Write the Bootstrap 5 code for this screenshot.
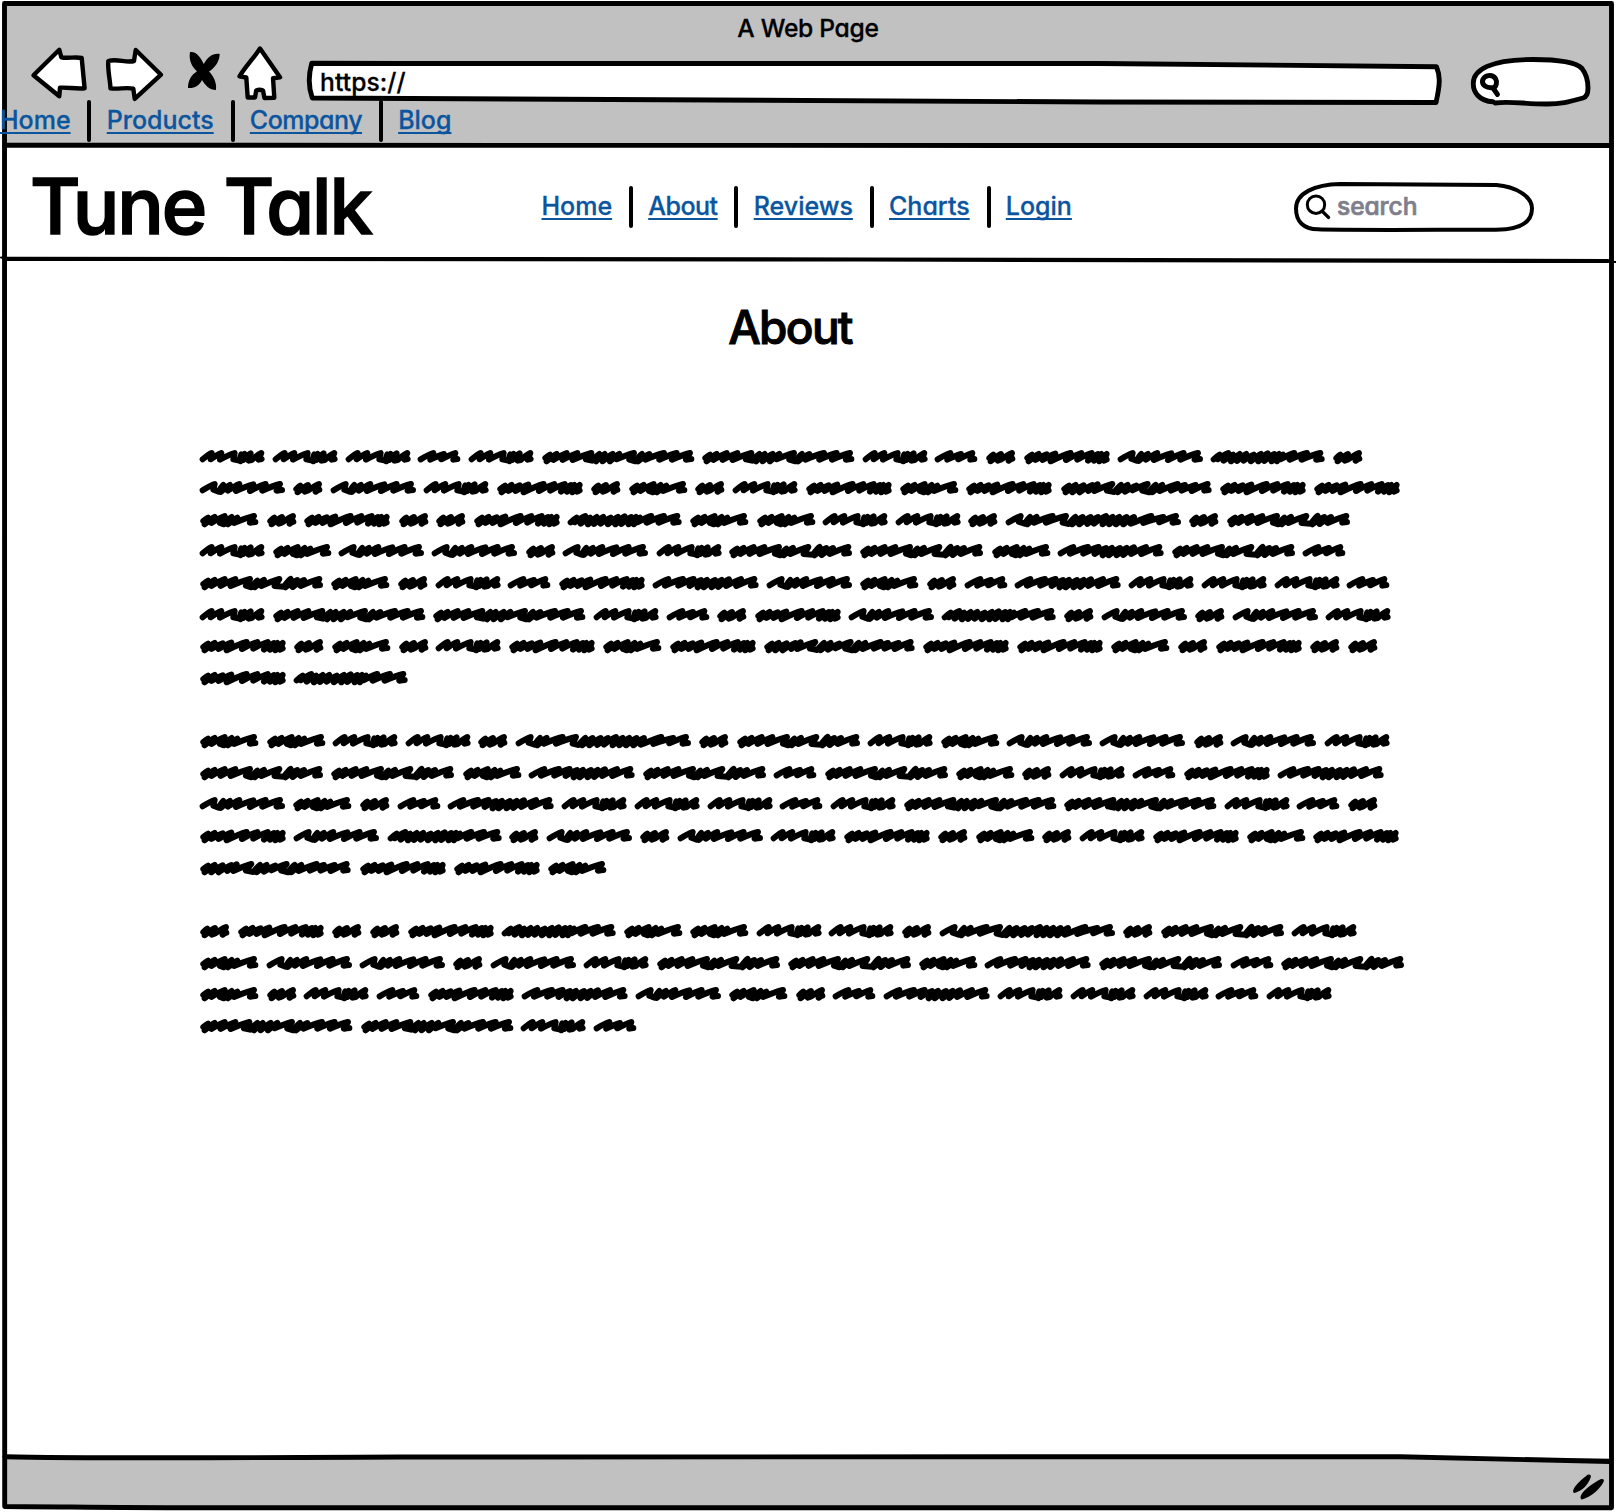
<!DOCTYPE html>
<html lang="en">
<head>
<meta charset="utf-8">
<meta name="viewport" content="width=device-width, initial-scale=1">
<title>A Web Page</title>
<link href="https://cdn.jsdelivr.net/npm/bootstrap@5.3.0/dist/css/bootstrap.min.css" rel="stylesheet">
<style>
  body { background: #fff; color: #000; font-family: Inter, "Open Sans", sans-serif; font-feature-settings: "cv11"; font-weight: 500; -webkit-text-stroke: .3px; overflow: hidden; }
  .sketch-window { width: 1616px; height: 1512px; padding: 4px 4px 4px 0; }
  .sketch-frame { pointer-events: none; z-index: 5; }
  .ink { fill: none; stroke: #000; stroke-linecap: round; stroke-linejoin: round; }
  .paper { fill: #fff; }
  .chrome-bar { background: #c1c1c1; margin-left: 4px; }
  .chrome-top { height: 141px; }
  .chrome-bottom { height: 50px; }
  .window-title { height: 42px; line-height: 49px; font-size: 24.6px; letter-spacing: -.28px; }
  .toolbar-row { height: 54px; padding-left: 24px; }
  .toolbar-row svg, .site-search svg { display: block; overflow: visible; flex: none; }
  .url-text { left: 16px; top: 18px; line-height: 36px; font-size: 24.6px; letter-spacing: .1px; }
  .bookmark-row { height: 45px; margin-left: -4px; }
  .link-row a { color: #0b559f; font-size: 25px; line-height: 40px; text-decoration: underline; text-decoration-thickness: 1.7px; text-underline-offset: 2.5px; text-decoration-skip-ink: none; white-space: nowrap; position: relative; z-index: 6; }
  .link-row .snug { letter-spacing: -.48px; }
  .divider { width: 4px; height: 42px; background: #000; border-radius: 2px; margin: 0 15.3px 0 16.8px; flex: none; }
  .site-header { height: 114px; padding: 10px 78px 0 30px; }
  .brand { width: 511.5px; font-size: 77.5px; line-height: 1; letter-spacing: -2.1px; -webkit-text-stroke: 1.6px; }
  .search-text { color: #7f7f8c; left: 43px; top: 9px; line-height: 30px; font-size: 24.6px; letter-spacing: -.1px; -webkit-text-stroke: .7px; }
  .page-heading { margin-top: 40px; padding-right: 32px; font-size: 46px; line-height: 56px; font-weight: 500; letter-spacing: -1.7px; -webkit-text-stroke: 1px; }
  .scribble-copy { padding: 94.6px 0 0 200.3px; }
  .scribble-block { margin-bottom: 31.63px; }
  .scribble-line { height: 31.63px; }
  .scribble-line svg { display: block; overflow: visible; flex: none; }
  .scribble-line path { stroke-width: 18; }
</style>
</head>
<body>
<div class="sketch-window d-flex flex-column position-relative">
  <header class="chrome-bar chrome-top d-flex flex-column">
    <div class="window-title text-center">A Web Page</div>
    <div class="toolbar-row d-flex">
      <svg width="72" height="54" viewBox="28 46 72 54"><path class="ink paper" stroke-width="4.4" d="M33.5 75.3 59.3 49.8 61.3 57.3C68 58.8 75 56.5 81.7 58L84.6 88.3C76 89.3 67 87 60 87.7L59.3 96.3Z"/></svg>
      <svg width="84" height="54" viewBox="100 46 84 54"><path class="ink paper" stroke-width="4.4" d="M108.3 61C117 58.5 126 63 134 61L135.7 50 161 74.7 134.7 98.8 133.3 88.6C126 87 118 89.5 110.5 88.3 110 79 107.5 70 108.3 61Z"/></svg>
      <svg width="50" height="54" viewBox="184 46 50 54"><path d="M190 52C196.500 51 201 58 203.800 64 207.500 57 213 53 219.700 54 219.500 61 215.500 67.500 209 71.500 213 75.500 217 82 216 90 209.500 90 205 85 202 80 199 86 194.500 88.500 188 88 188 80 191.500 75 197 71.300 192 67 188.500 60 190 52Z"/></svg>
      <svg width="70" height="54" viewBox="234 46 70 54"><path class="ink paper" stroke-width="4.4" d="M260 48.500 280 77.300 273 78.200 274.300 97.700 264.500 98 263 90.500Q259.500 89 256.200 90.500L255 97.500 247.700 97.500 246.300 77.500 239.500 76.300C246 66 253 59 260 48.500Z"/></svg>
      <div class="position-relative">
        <svg width="1162" height="54" viewBox="304 46 1162 54"><path class="ink paper" stroke-width="4.900" d="M311.700 63.300C600 64 900 62 1100 63.500L1436.500 66.700C1440.500 76 1440 85 1436 102.500L1100 102C850 101 600 98 312.300 98Q306.500 82 311.700 63.300Z"/></svg>
        <span class="url-text position-absolute">https://</span>
      </div>
      <svg width="128" height="54" viewBox="1466 46 128 54"><path class="ink paper" stroke-width="4.900" d="M1493 101.700C1479 101 1473 92 1473.300 83 1473.500 70 1490 59.500 1533 59.500 1557 59.500 1576 62 1582 68.500 1587 75 1588 81 1588 88 1588 93 1586.500 97 1583 98 1569 102 1560 104.200 1546 104 1525 104 1510 101 1495 103"/><path class="ink" stroke-width="4.900" d="M1493.500 87.500C1486 88.500 1482 85 1482.500 80.500 1484 75 1492 73.500 1495.500 78.500 1497.500 82 1496.500 87 1493 88L1497.500 94.500"/></svg>
    </div>
    <nav class="bookmark-row link-row d-flex">
      <a href="#">Home</a><span class="divider"></span>
      <a href="#">Products</a><span class="divider"></span>
      <a href="#" class="snug">Company</a><span class="divider"></span>
      <a href="#">Blog</a>
    </nav>
  </header>

  <div class="site-header d-flex align-items-center">
    <div class="brand text-nowrap">Tune Talk</div>
    <nav class="link-row d-flex">
      <a href="#">Home</a><span class="divider"></span>
      <a href="#" class="snug">About</a><span class="divider"></span>
      <a href="#">Reviews</a><span class="divider"></span>
      <a href="#">Charts</a><span class="divider"></span>
      <a href="#">Login</a>
    </nav>
    <div class="site-search position-relative ms-auto">
      <svg width="240" height="50" viewBox="1294 182 240 50"><path class="ink paper" stroke-width="4" d="M1340 184C1315 184.500 1296 193 1296 208.500 1296 221 1303 229 1318 229.300 1340 230.500 1470 229.500 1496 229.800 1520 229.500 1532 222 1532 208.500 1532 196 1515 186.500 1496.500 185Z"/><circle class="ink" stroke-width="3" cx="1316" cy="204.700" r="8.700"/><path class="ink" stroke-width="3.200" d="M1322.500 211.500 1328.600 217.500"/></svg>
      <span class="search-text position-absolute">search</span>
    </div>
  </div>

  <main class="flex-grow-1">
    <h1 class="page-heading text-center mb-0">About</h1>
    <div class="scribble-copy" id="copy"></div>
  </main>
  <footer class="chrome-bar chrome-bottom"></footer>

  <svg class="sketch-frame position-absolute top-0 start-0" width="1616" height="1512" viewBox="0 0 1616 1512">
    <g class="ink" stroke-width="4.900">
      <path d="M4.500 3.500H1611.500C1612.500 500 1611 1000 1611.500 1507.700 1000 1509 500 1504 216 1507.700 140 1508 80 1507 4.700 1506.500 5.500 1000 3.500 500 4.500 3.500Z"/>
      <path d="M5 145.200C300 147 700 147 1100 145.500H1610"/>
      <path stroke-width="4.200" d="M7 258.800C300 259.500 1200 259 1608 261"/>
      <path stroke-width="2" d="M1 257.500 10 259M1605 261.300 1616 262"/>
      <path d="M5 1456.700C100 1459 250 1457.500 400 1457 800 1455.500 1100 1456 1400 1456.700L1610 1461.500"/>
    </g>
    <path d="M1588 1474.500Q1592 1474 1590.500 1478C1588 1485 1582 1491 1574.500 1493 1571 1492 1574 1485 1588 1474.500ZM1601 1479Q1605 1478.500 1603.500 1482C1600 1489 1591 1497 1582 1499.500 1578 1498 1582 1489 1601 1479Z"/>
  </svg>
</div>
<script src="https://cdn.jsdelivr.net/npm/bootstrap@5.3.0/dist/js/bootstrap.bundle.min.js"></script>
<script>
  // Scribbled words: [advance, stroke points], drawn at a third of their size.
  const words = {
    a: [218, "8,28 35,9 32,28 64,9 60,29 104,9 100,28 118,32 124,13 121,34 134,12 130,30 152,10 146,32 155,30 184,9 176,29 185,27"],
    b: [152, "8,28 46,9 37,29 78,12 70,28 112,9 106,29 118,27"],
    c: [113.5, "10,24 22,14 14,34 45,12 36,32 46,28 78,9 68,32 79,26"],
    d: [199, "10,24 24,14 14,34 44,12 34,30 74,9 60,30 72,34 95,12 84,34 112,14 102,30 162,9 150,29 166,27"],
    e: [279.5, "8,28 44,9 40,26 56,32 70,12 62,33 90,12 84,29 118,9 108,30 160,10 150,30 197,9 187,29 240,9 230,29 246,27"],
    f: [282.5, "10,24 24,14 14,34 44,12 34,30 68,13 56,30 94,11 80,34 140,9 126,30 172,9 160,29 203,9 192,32 222,12 210,32 232,12 226,34 248,12 240,32 248,28"],
    g: [393.5, "10,24 24,14 14,34 44,12 34,30 74,9 62,30 106,9 92,30 150,9 138,29 154,34 172,14 164,34 192,12 184,30 238,9 224,30 252,32 272,9 256,34 292,12 278,33 312,12 302,30 358,9 346,29 360,27"],
    h: [365.5, "8,28 26,14 20,28 52,9 38,32 66,14 60,34 86,12 78,33 106,12 98,32 128,14 120,34 150,12 142,34 170,10 160,33 190,12 182,34 204,12 198,34 216,14 208,28 250,9 236,29 288,9 272,29 328,9 316,29 332,27"],
    i: [481.5, "10,24 24,14 14,34 44,12 34,30 74,9 62,30 106,9 92,30 148,9 132,28 150,32 172,12 162,34 188,12 182,34 212,12 204,34 232,12 224,28 276,9 262,29 280,34 300,12 288,34 322,12 310,29 366,9 352,29 404,9 390,29 444,9 432,29 448,27"],
    j: [478, "10,24 24,14 14,34 44,12 34,34 68,13 56,34 94,12 82,30 110,10 100,30 154,9 138,29 160,33 180,12 170,34 200,12 192,32 226,14 214,28 260,9 244,29 264,34 284,12 274,34 304,12 296,30 350,9 330,29 372,12 362,29 404,12 392,30 440,9 430,29 443,27"],
    k: [342.5, "8,28 46,9 36,29 90,9 76,29 122,9 110,30 144,12 134,34 162,12 152,34 186,12 176,34 206,12 196,33 228,10 220,30 264,9 250,30 304,9 294,29 308,27"],
    l: [549.5, "8,28 44,9 38,26 56,32 72,12 64,34 92,12 84,29 140,9 120,29 180,9 170,29 188,33 208,12 198,34 230,12 220,34 254,12 244,33 276,12 264,32 300,9 290,34 320,12 310,34 340,12 330,34 362,12 352,34 384,12 374,32 386,28 436,9 412,30 472,12 460,28 510,9 500,29 516,27"]
  };
  const paragraphs = [
    ["aaabaiiabcfehc", "eceafcdcafdfjff", "dcfccfhddaaclcg", "adeeceaggdkgb", "gdcabfkedcbkaaab", "aiiabcfehcecea", "fcdcafdfjffdcfcc", "fh"],
    ["ddaaclcgadeecea", "ggdkgbgdcabfk", "edcbkaaabaiiabc", "fehceceafcdcafdf", "jffd"],
    ["cfccfhddaaclcga", "deeceaggdkgbg", "dcabfkedcbkaaaba", "iiab"]
  ];
  // Each upstroke bends over towards its peak; the return stroke is straight.
  const stroke = pts => pts.split(" ").map(p => p.split(",").map(Number)).reduce((d, [x, y], n, all) => {
    if (!n) return `M${x} ${y}`;
    const [px, py] = all[n - 1];
    return y < py ? `${d}Q${px + (x - px) * .62} ${y + (py - y) * .25} ${x} ${y}` : `${d}L${x} ${y}`;
  }, "");
  const word = k => `<svg width="${words[k][0] / 3}" height="14" viewBox="0 0 ${words[k][0]} 42"><path class="ink" d="${stroke(words[k][1])}"/></svg>`;
  document.getElementById("copy").innerHTML = paragraphs.map(p =>
    `<div class="scribble-block">${p.map(l => `<div class="scribble-line d-flex">${[...l].map(word).join("")}</div>`).join("")}</div>`).join("");
</script>
</body>
</html>
